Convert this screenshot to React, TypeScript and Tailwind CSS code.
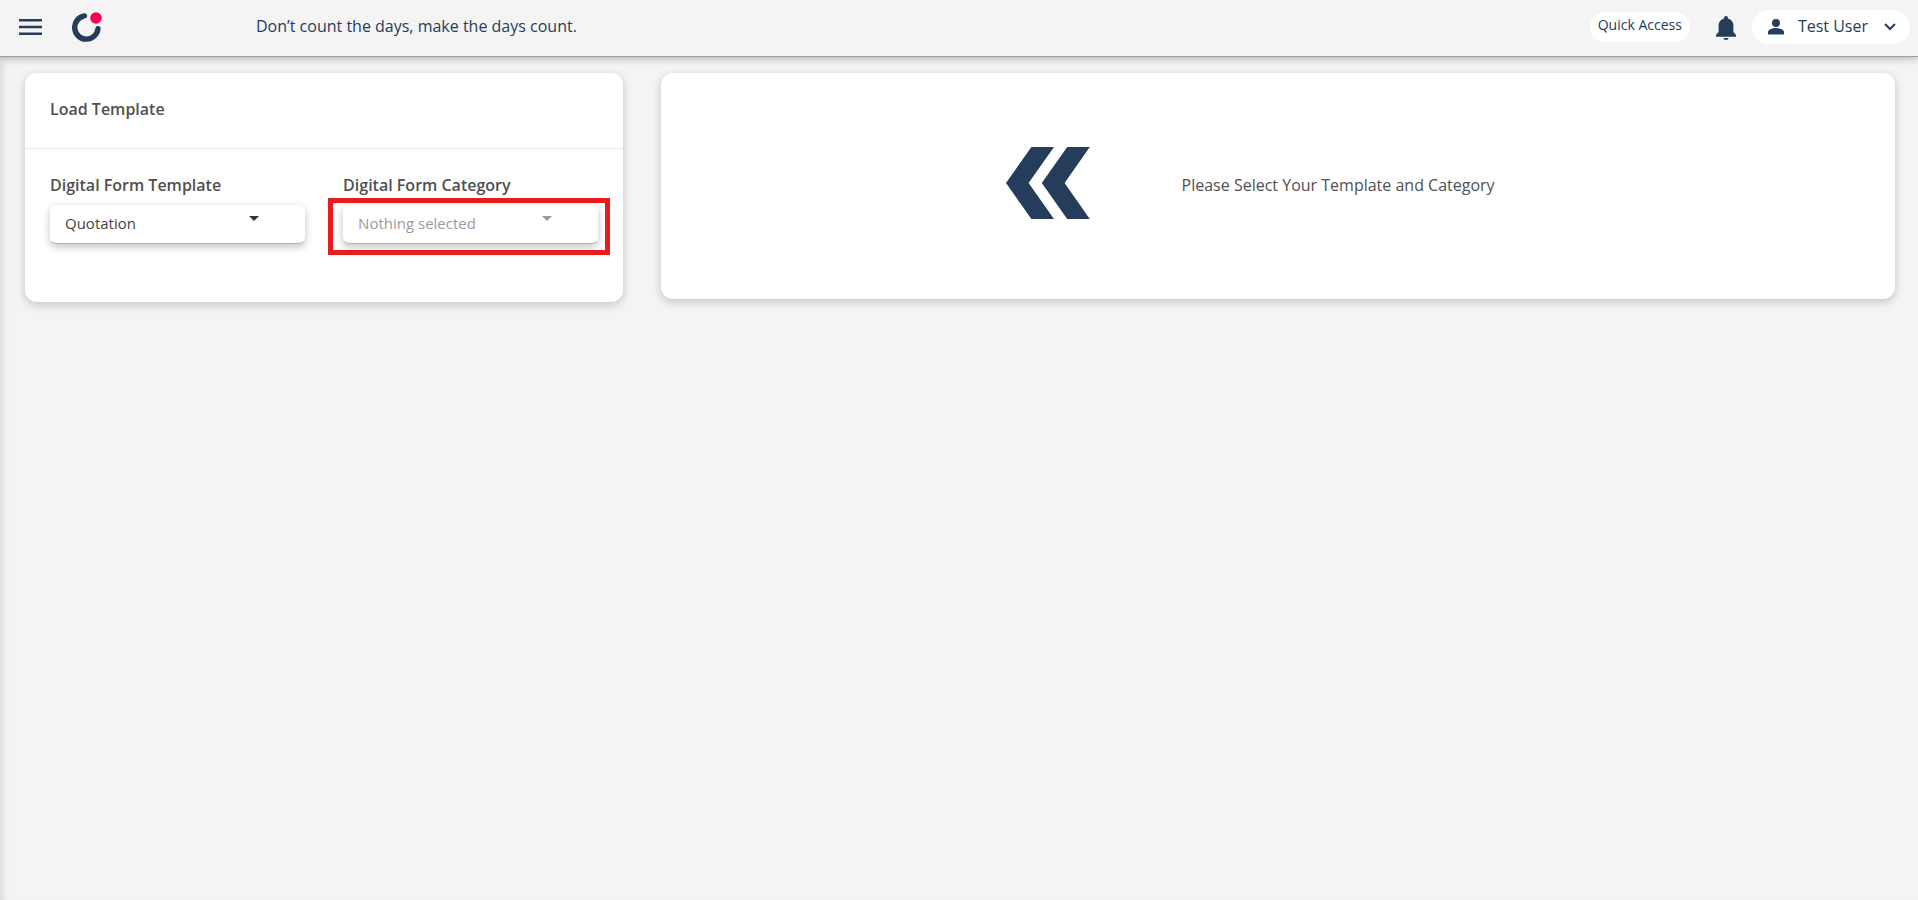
import { useState } from 'react';
import type { ReactNode } from 'react';

function Caret() {
  return (
    <svg viewBox="0 0 10 5" className="h-[5px] w-2.5" fill="currentColor" aria-hidden="true">
      <path d="M0 0h10L5 5z" />
    </svg>
  );
}

function Logo() {
  return (
    <svg viewBox="0 0 30 30" className="size-[30px]" aria-hidden="true">
      <path d="M12.4 3.900A11.700 11.700 0 1 0 26 16.800" fill="none" stroke="#253d5b" strokeWidth="5.400" strokeLinecap="round" />
      <circle cx="24" cy="6" r="5.800" fill="#ff0050" />
    </svg>
  );
}

type SelectFieldProps = {
  id: string;
  label: string;
  options: string[];
  disabled?: boolean;
  children?: ReactNode;
};

function SelectField({ id, label, options, disabled, children }: SelectFieldProps) {
  const [value, setValue] = useState(options[0]);
  return (
    <div className="flex flex-col gap-2">
      <label htmlFor={id} className="font-semibold leading-6 text-[#505050]">
        {label}
      </label>
      <div className="relative">
        <select
          id={id}
          value={value}
          disabled={disabled}
          onChange={(e) => setValue(e.target.value)}
          className="block h-[39px] w-full appearance-none rounded-md border-b border-[#b0b8b4] bg-white pb-0.5 pl-[15px] pr-16 text-[15px] text-[#444444] shadow-[0_3px_8px_rgba(0,0,0,0.24)] disabled:text-[#9b9b9b] disabled:opacity-100"
        >
          {options.map((o) => (
            <option key={o}>{o}</option>
          ))}
        </select>
        <span className={disabled ? 'pointer-events-none absolute right-[46px] top-[11px] text-[#999999]' : 'pointer-events-none absolute right-[46px] top-[11px] text-[#333333]'}>
          <Caret />
        </span>
        {children}
      </div>
    </div>
  );
}

export default function App() {
  return (
    <div className="flex min-h-screen flex-col bg-[#f4f4f4] font-['Open_Sans',sans-serif] text-base text-[#505050]">
      <header className="relative flex h-[57px] items-center border-b border-[#a0a0a0] pb-0.5 pl-[19px] pr-2 text-[#253d5b] shadow-[0_1px_8px_rgba(0,0,0,0.3)]">
        <button type="button" aria-label="Menu" className="mr-[30px]">
          <svg viewBox="0 0 23 16" className="h-4 w-[23px]" fill="currentColor" aria-hidden="true">
            <path d="M0 0h23v2.400H0zM0 6.800h23v2.400H0zM0 13.600h23V16H0z" />
          </svg>
        </button>
        <a href="#" aria-label="Home">
          <Logo />
        </a>
        <p className="ml-[154px] pb-0.5">Don’t count the days, make the days count.</p>
        <div className="ml-auto flex items-center">
          <button type="button" className="h-[30px] rounded-full bg-white px-2 pb-1 text-sm">
            Quick Access
          </button>
          <button type="button" aria-label="Notifications" className="ml-[26px] mr-4 pt-0.5">
            <svg viewBox="0 0 20 24" className="h-6 w-5" fill="currentColor" aria-hidden="true">
              <path d="M10 0a2 2 0 0 0-2 2v.6C4.700 3.500 2.600 6 2.600 9.500V16L0 19v1.800h20V19l-2.600-3V9.500C17.400 6 15.300 3.500 12 2.600V2a2 2 0 0 0-2-2zM7.500 22a2.500 2 0 0 0 5 0z" />
            </svg>
          </button>
          <button type="button" className="flex h-[34px] items-center rounded-full bg-white pl-4 pr-3.5">
            <svg viewBox="0 0 16 16" className="size-4" fill="currentColor" aria-hidden="true">
              <circle cx="8" cy="4" r="4" />
              <path d="M0 13c0-2.700 5.300-4 8-4s8 1.300 8 4v2.500H0z" />
            </svg>
            <span className="ml-3.5 pb-0.5">Test User</span>
            <svg viewBox="0 0 12 8" className="ml-4 h-2 w-3" fill="none" stroke="currentColor" strokeWidth="2" aria-hidden="true">
              <path d="M1 1l5 5 5-5" />
            </svg>
          </button>
        </div>
      </header>

      <main className="grid flex-1 grid-cols-[32fr_66fr] items-start gap-[38px] pb-6 pl-[25px] pr-[23px] pt-4 shadow-[inset_8px_0_8px_-6px_rgba(0,0,0,0.12)]">
        <section className="rounded-xl bg-white shadow-[0_3px_10px_rgba(0,0,0,0.2)]">
          <h1 className="border-b border-[#e9e9e9] px-[25px] pb-[27px] pt-6 font-semibold leading-6">Load Template</h1>
          <form className="grid grid-cols-2 gap-[38px] px-[25px] pb-[58px] pt-6">
            <SelectField id="form-template" label="Digital Form Template" options={['Quotation']} />
            <SelectField id="form-category" label="Digital Form Category" options={['Nothing selected']} disabled>
              <span className="pointer-events-none absolute -bottom-[11px] -left-[15px] -right-3 -top-[7px] border-[5px] border-[#e81c1c]" />
            </SelectField>
          </form>
        </section>

        <section className="flex items-start justify-center gap-[92px] rounded-xl bg-white pb-20 pr-14 pt-[74px] shadow-[0_3px_10px_rgba(0,0,0,0.2)]">
          <svg viewBox="0 0 84 72" className="h-[72px] w-[84px]" fill="#253d5b" aria-hidden="true">
            <path d="M0 36L25.400 0H48L22.600 36L48 72H25.400zM35.800 36L61.200 0H83.800L58.600 36L83.800 72H61.200z" />
          </svg>
          <p className="pt-[26px] leading-6">Please Select Your Template and Category</p>
        </section>
      </main>
    </div>
  );
}
